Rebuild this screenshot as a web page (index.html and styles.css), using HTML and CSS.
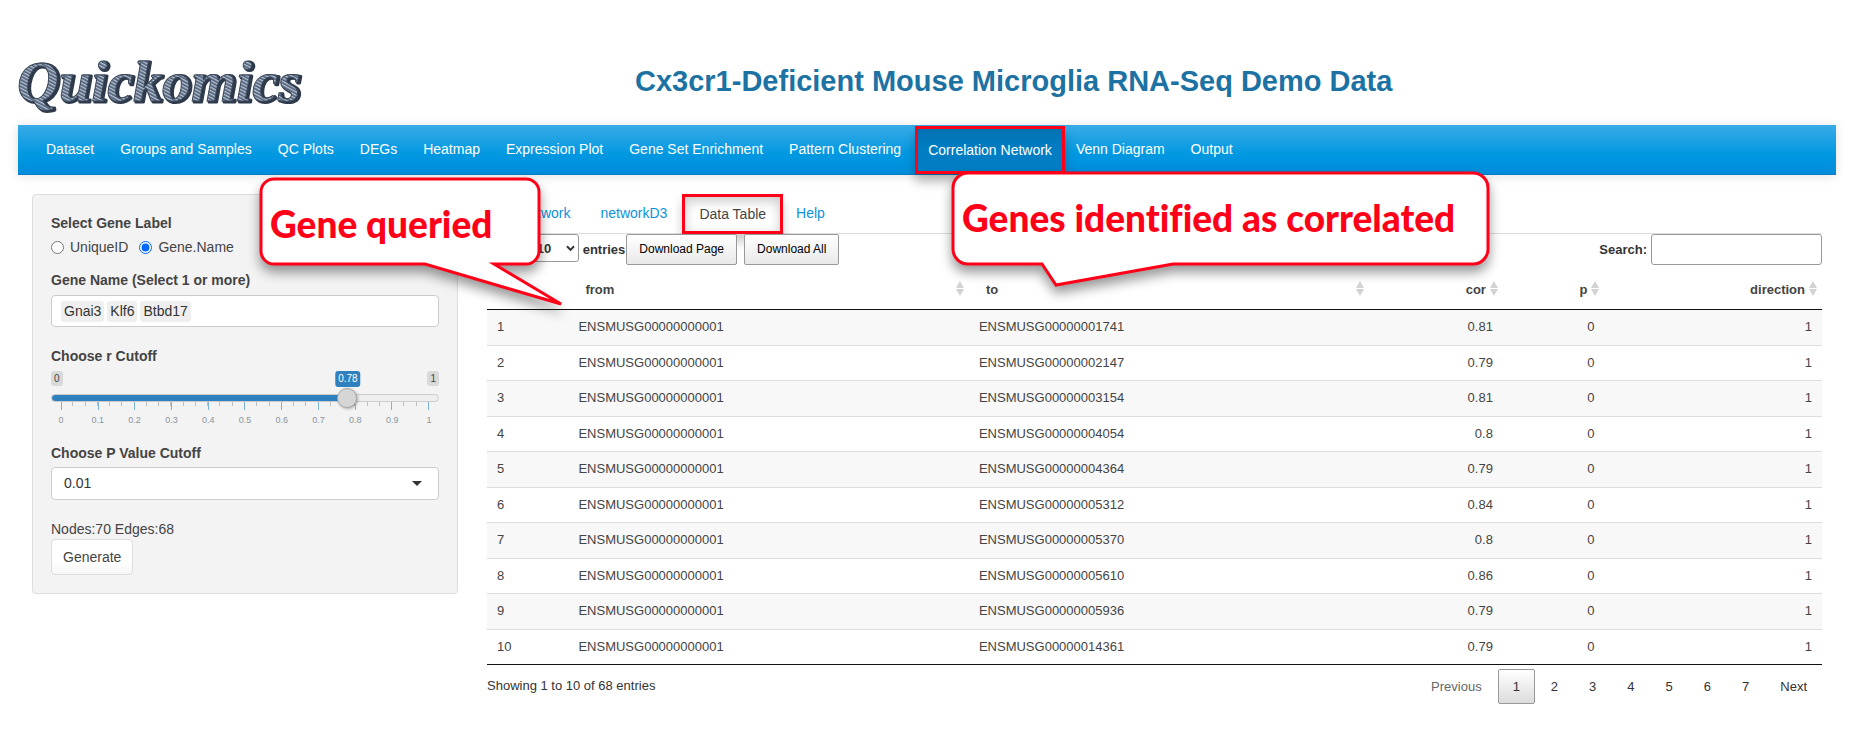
FILE: index.html
```html
<!DOCTYPE html>
<html lang="en">
<head>
<meta charset="utf-8">
<title>Quickomics</title>
<link rel="stylesheet" href="styles.css">
</head>
<body>
<header class="masthead">
  <svg class="logo" width="300" height="90" viewBox="0 0 300 90" role="img" aria-label="Quickomics">
    <defs>
      <pattern id="rope" width="3" height="3" patternUnits="userSpaceOnUse" patternTransform="rotate(28)">
        <rect width="3" height="3" fill="#4d5b70"/>
        <rect width="3" height="1.4" fill="#b4c2d6"/>
      </pattern>
    </defs>
    <text class="logo-shade" x="1" y="67">Quickomics</text>
    <text class="logo-rope" x="-1" y="66">Quickomics</text>
  </svg>
  <h1 class="title">Cx3cr1-Deficient Mouse Microglia RNA-Seq Demo Data</h1>
</header>

<nav class="navbar">
  <a href="#">Dataset</a>
  <a href="#">Groups and Samples</a>
  <a href="#">QC Plots</a>
  <a href="#">DEGs</a>
  <a href="#">Heatmap</a>
  <a href="#">Expression Plot</a>
  <a href="#">Gene Set Enrichment</a>
  <a href="#">Pattern Clustering</a>
  <a href="#" class="active">Correlation Network</a>
  <a href="#">Venn Diagram</a>
  <a href="#">Output</a>
</nav>

<main class="content">
  <form class="sidebar">
    <div class="heading">Select Gene Label</div>
    <div class="radios">
      <label><input type="radio" name="label">UniqueID</label>
      <label><input type="radio" name="label" checked>Gene.Name</label>
    </div>
    <label class="heading" for="genes">Gene Name (Select 1 or more)</label>
    <div class="gene-box">
      <span class="tag">Gnai3</span><span class="tag">Klf6</span><span class="tag">Btbd17</span>
      <input id="genes" type="text">
    </div>
    <label class="heading" for="cutoff">Choose r Cutoff</label>
    <div class="slider">
      <div class="slider-labels">
        <span class="limit">0</span><output class="value" for="cutoff">0.78</output><span class="limit">1</span>
      </div>
      <input id="cutoff" type="range" min="0" max="1" step="0.01" value="0.78">
      <div class="ticks">
        <span></span><span></span><span></span><span></span><span></span><span></span><span></span><span></span><span></span><span></span><span></span>
      </div>
      <div class="tick-labels">
        <span>0</span><span>0.1</span><span>0.2</span><span>0.3</span><span>0.4</span><span>0.5</span><span>0.6</span><span>0.7</span><span>0.8</span><span>0.9</span><span>1</span>
      </div>
    </div>
    <label class="heading" for="pvalue">Choose P Value Cutoff</label>
    <div class="select-box">
      <select id="pvalue"><option>0.01</option></select>
      <svg width="10" height="5" viewBox="0 0 10 5"><path d="M0 0h10L5 5z" fill="#333"/></svg>
    </div>
    <div class="counts">Nodes:70 Edges:68</div>
    <button type="button" class="generate">Generate</button>
  </form>

  <section class="results">
    <div class="tabs">
      <a href="#">visNetwork</a>
      <a href="#">networkD3</a>
      <a href="#" class="active">Data Table</a>
      <a href="#">Help</a>
    </div>
    <div class="toolbar">
      <label for="length">Show</label>
      <div class="length">
        <select id="length"><option>10</option></select>
        <svg width="9" height="7" viewBox="0 0 9 7"><path d="M1 1.3l3.5 3.6L8 1.3" fill="none" stroke="#333" stroke-width="2"/></svg>
      </div>
      <label for="length">entries</label>
      <button type="button" class="download">Download Page</button>
      <button type="button" class="download">Download All</button>
      <label class="search-label" for="search">Search:</label>
      <input id="search" class="search" type="search">
    </div>
    <table class="data">
      <colgroup><col class="c-index"><col class="c-gene"><col class="c-gene"><col class="c-cor"><col class="c-p"><col></colgroup>
      <thead>
        <tr><th></th><th class="sort">from</th><th class="sort">to</th><th class="sort num">cor</th><th class="sort num">p</th><th class="sort num">direction</th></tr>
      </thead>
      <tbody>
        <tr><td>1</td><td>ENSMUSG00000000001</td><td>ENSMUSG00000001741</td><td class="num">0.81</td><td class="num">0</td><td class="num">1</td></tr>
        <tr><td>2</td><td>ENSMUSG00000000001</td><td>ENSMUSG00000002147</td><td class="num">0.79</td><td class="num">0</td><td class="num">1</td></tr>
        <tr><td>3</td><td>ENSMUSG00000000001</td><td>ENSMUSG00000003154</td><td class="num">0.81</td><td class="num">0</td><td class="num">1</td></tr>
        <tr><td>4</td><td>ENSMUSG00000000001</td><td>ENSMUSG00000004054</td><td class="num">0.8</td><td class="num">0</td><td class="num">1</td></tr>
        <tr><td>5</td><td>ENSMUSG00000000001</td><td>ENSMUSG00000004364</td><td class="num">0.79</td><td class="num">0</td><td class="num">1</td></tr>
        <tr><td>6</td><td>ENSMUSG00000000001</td><td>ENSMUSG00000005312</td><td class="num">0.84</td><td class="num">0</td><td class="num">1</td></tr>
        <tr><td>7</td><td>ENSMUSG00000000001</td><td>ENSMUSG00000005370</td><td class="num">0.8</td><td class="num">0</td><td class="num">1</td></tr>
        <tr><td>8</td><td>ENSMUSG00000000001</td><td>ENSMUSG00000005610</td><td class="num">0.86</td><td class="num">0</td><td class="num">1</td></tr>
        <tr><td>9</td><td>ENSMUSG00000000001</td><td>ENSMUSG00000005936</td><td class="num">0.79</td><td class="num">0</td><td class="num">1</td></tr>
        <tr><td>10</td><td>ENSMUSG00000000001</td><td>ENSMUSG00000014361</td><td class="num">0.79</td><td class="num">0</td><td class="num">1</td></tr>
      </tbody>
    </table>
    <div class="footer">
      <div>Showing 1 to 10 of 68 entries</div>
      <div class="pages">
        <button type="button" class="muted">Previous</button>
        <button type="button" class="current">1</button>
        <button type="button">2</button>
        <button type="button">3</button>
        <button type="button">4</button>
        <button type="button">5</button>
        <button type="button">6</button>
        <button type="button">7</button>
        <button type="button">Next</button>
      </div>
    </div>
  </section>
</main>

<svg class="callout callout-query" width="306" height="130" viewBox="0 0 306 130">
  <path d="M15 3H267a13 13 0 0 1 13 13V75a13 13 0 0 1-13 13H235L302 128L166 88H15a13 13 0 0 1-13-13V16a13 13 0 0 1 13-13z"/>
  <text x="11" y="62">Gene queried</text>
</svg>
<svg class="callout callout-correlated" width="540" height="118" viewBox="0 0 540 118">
  <path d="M17 2H522a15 15 0 0 1 15 15V78a15 15 0 0 1-15 15H222L105 114L91 93H17a15 15 0 0 1-15-15V17a15 15 0 0 1 15-15z"/>
  <text x="11" y="61">Genes identified as correlated</text>
</svg>
</body>
</html>
```
FILE: styles.css
```css
* { box-sizing: border-box; }
body {
  position: relative;
  margin: 0;
  padding: 35px 35px 0 18px;
  background: #fff;
  color: #444;
  font: 13px/19px "Liberation Sans", Arial, sans-serif;
}
a { text-decoration: none; }
button, input, select { font: inherit; color: #333; }

.masthead { display: flex; height: 90px; }
.logo { flex: none; overflow: visible; }
.logo text { font: italic bold 58px "Liberation Serif", serif; stroke-linejoin: round; }
.logo-shade { fill: #2e3a4a; stroke: #2e3a4a; stroke-width: 3; }
.logo-rope { fill: url(#rope); stroke: #3b475a; stroke-width: 1; }
.title {
  flex: 1;
  margin: 0;
  padding: 29px 0 0 317px;
  color: #1c72a3;
  font-size: 29px;
  line-height: 34px;
  white-space: nowrap;
}

.navbar {
  display: flex;
  gap: 2px;
  height: 50px;
  padding-left: 16px;
  border-bottom: 1px solid #0a7cc4;
  background: linear-gradient(#3aabe7, #0098e1 60%, #008cdc);
  box-shadow: 0 1px 10px rgba(0, 0, 0, .12);
}
.navbar a {
  display: flex;
  align-items: center;
  padding: 0 12px;
  color: #fff;
  font-size: 14px;
  white-space: nowrap;
}
.navbar .active {
  margin-top: 1px;
  padding: 0 10px;
  border: 3px solid #ff0018;
  background: linear-gradient(#0072b2, #007dc3 50%);
  box-shadow: 0 8px 10px rgba(0, 0, 0, .25);
}
.navbar .active + a { padding-left: 9px; }

.content {
  display: grid;
  grid-template-columns: 426px 1fr;
  align-items: start;
  gap: 29px;
  padding: 19px 14px 0;
}
.sidebar {
  padding: 19px 18px 18px;
  border: 1px solid #ddd;
  border-radius: 4px;
  background: #f3f3f3;
}
.heading { display: block; font-size: 14px; font-weight: bold; }
.radios { display: flex; gap: 11px; margin: 5px 0 14px; }
.radios label { display: flex; align-items: center; font-size: 14px; }
.radios input { width: 13px; height: 13px; margin: 0 6px 0 0; accent-color: #0068ff; }
.gene-box {
  display: flex;
  align-items: center;
  gap: 3px;
  height: 32px;
  margin: 5px 0 20px;
  padding: 0 9px;
  border: 1px solid #ccc;
  border-radius: 4px;
  background: #fff;
}
.tag { padding: 1px 3px; border-radius: 3px; background: #efefef; color: #333; font-size: 14px; }
.gene-box input { flex: 1; min-width: 0; border: 0; outline: 0; }

.slider { margin: 5px 0 18px; }
.slider-labels { position: relative; display: flex; justify-content: space-between; }
.limit, .value { padding: 0 3px; border-radius: 3px; font-size: 10px; line-height: 15px; }
.limit { background: #d9d9d9; }
.value {
  position: absolute;
  left: 76%;
  transform: translateX(-50%);
  margin-left: 2px;
  background: #2f80bf;
  color: #fff;
  line-height: 16px;
}
.slider input {
  display: block;
  width: 100%;
  height: 20px;
  margin: 2px 0 0;
  appearance: none;
  background: none;
}
.slider input::-webkit-slider-runnable-track {
  height: 8px;
  border: 1px solid #ccc;
  border-radius: 8px;
  background: linear-gradient(90deg, #2f80bf 77%, #eee 77%) border-box;
}
.slider input::-webkit-slider-thumb {
  width: 20px;
  height: 20px;
  margin-top: -7px;
  appearance: none;
  border: 1px solid #aaa;
  border-radius: 50%;
  background: #d6d6d6;
  box-shadow: 1px 1px 3px rgba(0, 0, 0, .3);
}
.ticks {
  display: flex;
  justify-content: space-between;
  height: 8px;
  margin: -6px 10px 0;
  background: repeating-linear-gradient(90deg, transparent 0 calc(10% / 3 - 1px), #bbb calc(10% / 3 - 1px) calc(10% / 3)) 0 0 / 100% 4px no-repeat;
}
.ticks span { width: 1px; background: #7db4dc; }
.tick-labels { display: flex; justify-content: space-between; margin: 4px 0 0; color: #8a959c; font-size: 9px; line-height: 12px; }
.tick-labels span { width: 20px; text-align: center; }

.select-box { position: relative; display: flex; align-items: center; margin: 4px 0 20px; }
.select-box select {
  width: 100%;
  height: 33px;
  padding: 0 12px;
  appearance: none;
  border: 1px solid #ccc;
  border-radius: 4px;
  background: #fff;
  font-size: 14px;
}
.select-box svg { position: absolute; right: 17px; }
.counts { font-size: 14px; }
.generate {
  display: block;
  height: 36px;
  padding: 0 11px;
  border: 1px solid #ddd;
  border-radius: 4px;
  background: linear-gradient(#fff 60%, #f5f5f5);
  color: #444;
  font-size: 14px;
}

.tabs { display: flex; height: 40px; border-bottom: 1px solid #ddd; }
.tabs a { display: flex; align-items: center; padding: 0 15px; color: #0d92dc; font-size: 14px; }
.tabs .active {
  height: 40px;
  padding: 0 14px;
  border: 3px solid #ff0018;
  color: #444;
  box-shadow: 0 8px 10px rgba(0, 0, 0, .2), inset 0 4px 12px rgba(0, 0, 0, .22);
}
.tabs .active + a { padding-left: 13px; }
.toolbar { display: flex; align-items: center; height: 31px; color: #333; }
.toolbar label { font-weight: bold; }
.length { position: relative; display: flex; align-items: center; align-self: flex-start; margin: 0 4px 0 5px; }
.length select {
  width: 52px;
  height: 28px;
  padding: 0 9px;
  appearance: none;
  border: 1px solid #999;
  border-radius: 3px;
  background: #fff;
  font-weight: bold;
}
.length svg { position: absolute; right: 4px; }
.download {
  height: 31px;
  margin: 0 6px 0 1px;
  padding: 0 12px;
  border: 1px solid #999;
  border-radius: 2px;
  background: linear-gradient(#fff, #e9e9e9);
  color: #000;
  font-size: 12px;
}
.search-label { margin-left: auto; }
.search { width: 171px; height: 31px; margin-left: 4px; border: 1px solid #999; border-radius: 3px; background: #fff; }

.data { width: 100%; border-collapse: collapse; table-layout: fixed; border-bottom: 1px solid #111; }
.c-index { width: 6.1%; }
.c-gene { width: 30%; }
.c-cor { width: 10%; }
.c-p { width: 7.6%; }
.data th { position: relative; height: 44px; padding: 5px 17px 0; border-bottom: 1px solid #111; text-align: left; }
.data td { padding: 8px 10px; border-top: 1px solid #ddd; line-height: 18px; }
.data tbody tr:first-child td { border-top: 0; }
.data tbody tr:nth-child(odd) td { padding-bottom: 9px; background: #f8f8f8; }
.data .num { text-align: right; }
.sort::before, .sort::after {
  content: "";
  position: absolute;
  right: 5px;
  border: 4px solid transparent;
}
.sort::before { top: 16px; border-top: 0; border-bottom: 7px solid #d3d3d3; }
.sort::after { top: 24px; border-bottom: 0; border-top: 7px solid #d3d3d3; }

.footer { display: flex; justify-content: space-between; align-items: flex-start; color: #333; padding-top: 4px; }
.footer > div:first-child { padding-top: 7px; }
.pages { display: flex; gap: 1px; }
.pages button { height: 35px; padding: 0 14px; border: 1px solid transparent; border-radius: 2px; background: none; }
.pages .muted { color: #666; }
.pages .current { border-color: #999; background: linear-gradient(#fff, #dcdcdc); }

.callout { position: absolute; overflow: visible; }
.callout path { fill: #fff; stroke: #ff0018; stroke-width: 3; filter: drop-shadow(0 7px 6px rgba(0, 0, 0, .4)); }
.callout text { fill: #ff0018; font: 900 37px Lato, sans-serif; font-variant-ligatures: none; }
.callout-query { left: 259px; top: 176px; }
.callout-correlated { left: 951px; top: 171px; }
```
